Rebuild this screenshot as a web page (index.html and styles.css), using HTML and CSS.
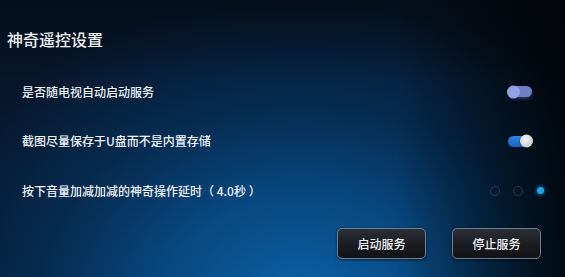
FILE: index.html
```html
<!DOCTYPE html>
<html lang="zh-CN">
<head>
<meta charset="utf-8">
<link rel="stylesheet" href="styles.css">
</head>
<body>
<div class="screen">
  <div class="title">神奇遥控设置</div>
  <div class="rows">
    <div class="row">
      <span class="label">是否随电视自动启动服务</span>
      <span class="toggle off"><span class="knob"></span></span>
    </div>
    <div class="row">
      <span class="label">截图尽量保存于U盘而不是内置存储</span>
      <span class="toggle on"><span class="knob"></span></span>
    </div>
    <div class="row">
      <span class="label">按下音量加减加减的神奇操作延时（ 4.0秒 ）</span>
      <span class="dots"><span class="dot"></span><span class="dot"></span><span class="dot active"></span></span>
    </div>
  </div>
  <div class="actions">
    <button class="btn">启动服务</button>
    <button class="btn">停止服务</button>
  </div>
</div>
</body>
</html>
```
FILE: styles.css
```css
html, body {
  margin: 0;
  padding: 0;
  background: #05101e;
}
.screen {
  width: 565px;
  height: 277px;
  overflow: hidden;
  font-family: "Noto Sans CJK SC", "Noto Sans", sans-serif;
  font-weight: 500;
  color: #eef2f7;
  background:
    linear-gradient(to right, rgba(0,0,0,0) 70%, rgba(0,0,0,0.75) 100%),
    linear-gradient(to bottom, rgba(0,0,0,0.35) 0%, rgba(0,0,0,0) 30%),
    radial-gradient(ellipse 400px 300px at 300px 300px, #0b62a8 0%, #08487f 35%, #062b50 65%, #07162a 100%);
  display: flex;
  flex-direction: column;
}
.title {
  font-size: 16px;
  line-height: 20px;
  margin-top: 29px;
  padding-left: 7px;
}
.rows {
  margin-top: 18px;
  display: flex;
  flex-direction: column;
}
.row {
  height: 49.5px;
  display: flex;
  align-items: center;
  justify-content: space-between;
  padding-left: 22px;
  padding-right: 20px;
}
.label {
  font-size: 12px;
  line-height: 16px;
}
.toggle {
  position: relative;
  width: 24px;
  height: 11px;
  border-radius: 6px;
  margin-right: 13px;
}
.toggle.off {
  background: #6f7fc4;
  box-shadow: 0 2px 3px rgba(120,140,220,0.35);
}
.toggle.on {
  background: linear-gradient(to bottom, #2f86e6, #1d60c0);
}
.knob {
  position: absolute;
  top: 50%;
  width: 13px;
  height: 13px;
  border-radius: 50%;
  transform: translateY(-50%);
}
.toggle.off .knob {
  left: -1px;
  background: #93a1e6;
}
.toggle.on .knob {
  right: -1px;
  background: radial-gradient(circle at 40% 35%, #f4f4f4, #c4c8cc 80%);
  box-shadow: 0 1px 2px rgba(0,0,0,0.5);
}
.dots {
  display: flex;
  align-items: center;
  gap: 13px;
}
.dot {
  width: 8px;
  height: 8px;
  border-radius: 50%;
  border: 1px solid rgba(90,120,150,0.35);
}
.dot.active {
  width: 7px;
  height: 7px;
  border: none;
  background: #1fa6e4;
  box-shadow: 0 0 4px #1a8fd8;
  margin-left: 1px;
  margin-right: 1px;
}
.actions {
  margin-top: 12px;
  display: flex;
  justify-content: flex-end;
  gap: 26px;
  padding-right: 24px;
}
.btn {
  width: 89px;
  height: 31px;
  border-radius: 5px;
  border: 1px solid #6a7f96;
  background: linear-gradient(to bottom, #2b2f36 0%, #1a1c21 55%, #121316 100%);
  color: #eef1f4;
  font-family: "Noto Sans CJK SC", "Noto Sans", sans-serif;
  font-weight: 500;
  font-size: 12px;
  padding: 0;
  box-shadow: 0 1px 3px rgba(0,0,0,0.6);
}
```
